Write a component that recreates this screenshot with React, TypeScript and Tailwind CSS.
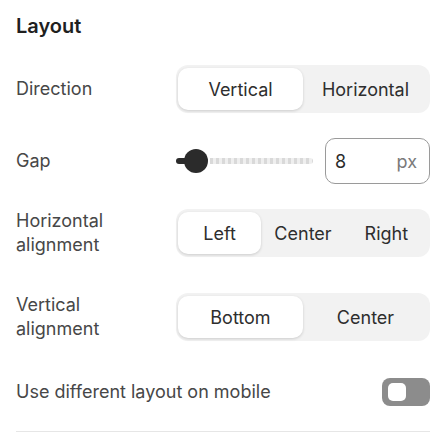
import { useState } from 'react';

type SegmentProps = {
  options: string[];
  value: string;
  onChange: (v: string) => void;
};

function Segmented({ options, value, onChange }: SegmentProps) {
  return (
    <div className="flex w-[254px] h-12 rounded-xl bg-[#f2f2f2] px-0.5 py-[3px]">
      {options.map((opt) => (
        <button
          key={opt}
          onClick={() => onChange(opt)}
          className={`flex-1 flex items-center justify-center rounded-[10px] text-[18px] text-[#2e2e2e] ${
            value === opt ? 'bg-white shadow-[0_1px_3px_rgba(0,0,0,0.16)]' : ''
          }`}
        >
          {opt}
        </button>
      ))}
    </div>
  );
}

export default function App() {
  const [direction, setDirection] = useState('Vertical');
  const [hAlign, setHAlign] = useState('Left');
  const [vAlign, setVAlign] = useState('Bottom');
  const [mobile, setMobile] = useState(false);

  return (
    <div className="w-[448px] h-[436px] bg-white pl-4 pr-[18px] pt-3 font-['Inter',sans-serif] overflow-hidden">
      <h2 className="text-[20px] leading-7 font-semibold text-[#1f1f1f]">Layout</h2>

      {/* Direction */}
      <div className="mt-[25px] flex items-center justify-between h-12">
        <span className="text-[18px] leading-6 text-[#474747]">Direction</span>
        <Segmented options={['Vertical', 'Horizontal']} value={direction} onChange={setDirection} />
      </div>

      {/* Gap */}
      <div className="mt-[25px] flex items-center justify-between h-[46px]">
        <span className="text-[18px] leading-6 text-[#474747]">Gap</span>
        <div className="flex items-center w-[254px]">
          <div className="flex items-center flex-1">
            <div className="w-3 h-1.5 rounded-l-full bg-[#2b2b2b]" />
            <div className="w-6 h-6 -ml-1 rounded-full bg-[#2b2b2b]" />
            <div className="flex-1 h-1.5 ml-0.5 rounded-r-full bg-[repeating-linear-gradient(90deg,#d9d9d9_0_3px,#efefef_3px_6px)]" />
          </div>
          <div className="ml-3 w-[105px] h-[46px] rounded-[10px] border border-[#9a9a9a] flex items-center justify-between pl-[9px] pr-3 text-[18px]">
            <span className="text-[#2b2b2b]">8</span>
            <span className="text-[#7a7a7a]">px</span>
          </div>
        </div>
      </div>

      {/* Horizontal alignment */}
      <div className="mt-[25px] flex items-center justify-between h-12">
        <span className="text-[18px] leading-6 text-[#474747]">
          Horizontal
          <br />
          alignment
        </span>
        <Segmented options={['Left', 'Center', 'Right']} value={hAlign} onChange={setHAlign} />
      </div>

      {/* Vertical alignment */}
      <div className="mt-9 flex items-center justify-between h-12">
        <span className="text-[18px] leading-6 text-[#474747]">
          Vertical
          <br />
          alignment
        </span>
        <Segmented options={['Bottom', 'Center']} value={vAlign} onChange={setVAlign} />
      </div>

      {/* Mobile toggle */}
      <div className="mt-[27px] flex items-center justify-between h-12">
        <span className="text-[18px] leading-6 text-[#474747]">Use different layout on mobile</span>
        <button
          onClick={() => setMobile(!mobile)}
          className={`w-12 h-7 rounded-lg flex items-center px-1.5 ${
            mobile ? 'bg-[#2b2b2b] justify-end' : 'bg-[#8c8c8c] justify-start'
          }`}
        >
          <span className="w-[18px] h-[18px] rounded-[5px] bg-white" />
        </button>
      </div>

      <div className="mt-[15px] border-t border-[#e6e6e6]" />
    </div>
  );
}
